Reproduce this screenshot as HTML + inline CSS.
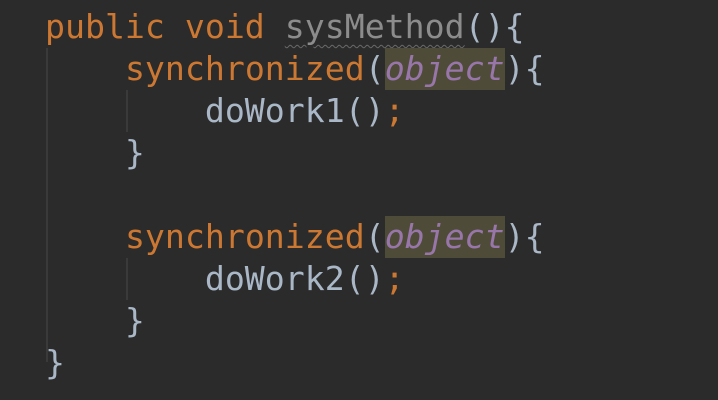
<!DOCTYPE html>
<html><head><meta charset="utf-8"><style>
html,body{margin:0;padding:0;background:#2b2b2b;width:718px;height:400px;overflow:hidden}
.code{position:absolute;left:45px;top:6px;font-family:"DejaVu Sans Mono","Liberation Mono",monospace;font-size:33.2px;line-height:42px;color:#a9b7c6}
.l{height:42px;white-space:pre}
.k{color:#cc7832}
.g{color:#8c8c8c;text-decoration:underline wavy #6a6a6a;text-decoration-thickness:1px;text-underline-offset:6px}
.o{color:#9876aa;font-style:italic;background:#4e4c38;display:inline-block;height:42px}
.guide{position:absolute;width:2px;background:#3a3a3a}
</style></head><body>
<div class="guide" style="left:46px;top:48px;height:314px"></div>
<div class="guide" style="left:126px;top:90px;height:42px"></div>
<div class="guide" style="left:126px;top:258px;height:42px"></div>
<div class="code">
<div class="l"><span class="k">public void </span><span class="g">sysMethod</span>(){</div>
<div class="l">    <span class="k">synchronized</span>(<span class="o">object</span>){</div>
<div class="l">        doWork1()<span class="k">;</span></div>
<div class="l">    }</div>
<div class="l"> </div>
<div class="l">    <span class="k">synchronized</span>(<span class="o">object</span>){</div>
<div class="l">        doWork2()<span class="k">;</span></div>
<div class="l">    }</div>
<div class="l">}</div>
</div>
</body></html>
